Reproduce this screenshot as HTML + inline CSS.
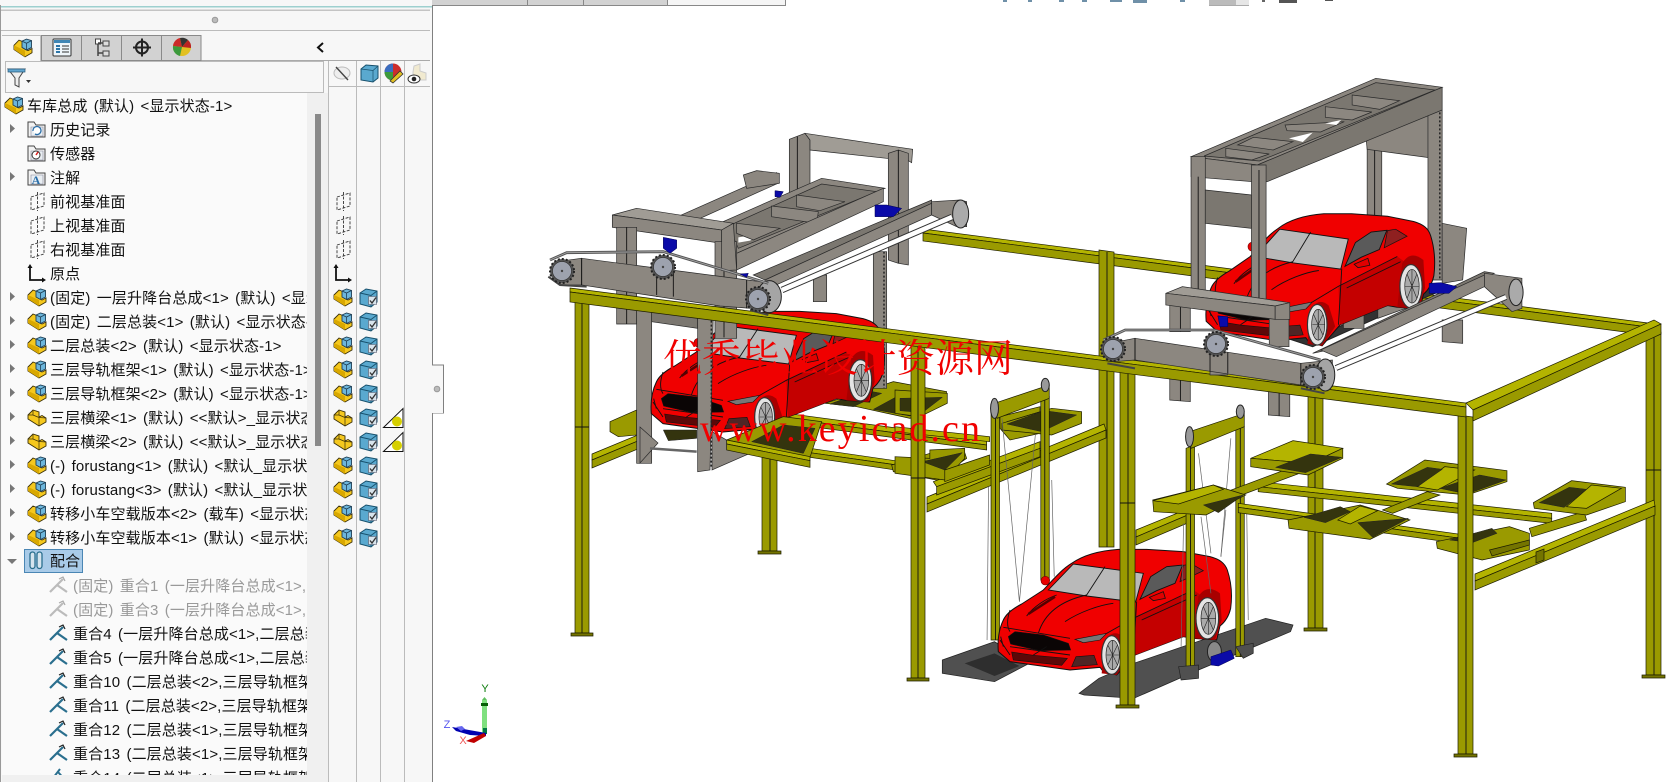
<!DOCTYPE html>
<html lang="zh"><head><meta charset="utf-8"><title>SolidWorks</title>
<style>
html,body{margin:0;padding:0;width:1676px;height:782px;overflow:hidden;background:#fff}
svg{position:absolute;left:0;top:0}
svg *{vector-effect:non-scaling-stroke}
.y{fill:#9a9a00;stroke:#1c1c00;stroke-width:.7}
.yl{fill:#b4b400;stroke:#1c1c00;stroke-width:.7}
.yd{fill:#747400;stroke:#1c1c00;stroke-width:.7}
.sl{fill:#34340e;stroke:#222;stroke-width:.5}
.g{fill:#8c8780;stroke:#2a2a2a;stroke-width:.7}
.gd{fill:#7b7770;stroke:#2a2a2a;stroke-width:.7}
.gl{fill:#a09c95;stroke:#2a2a2a;stroke-width:.7}
.dk{fill:#505050;stroke:#222;stroke-width:.7}
.bl{fill:#0a0aa8;stroke:#000050;stroke-width:.5}
.ln{fill:none;stroke:#111;stroke-width:.9}
#panel{position:absolute;left:0;top:0;width:432px;height:782px;background:#f7f7f7;font:15px/24px "Liberation Sans","Noto Sans CJK SC",sans-serif;color:#111;overflow:hidden}
#tree{position:absolute;left:2px;top:95px;width:305px;height:680px;background:#fafafa;overflow:hidden}
#treebg{position:absolute;left:2px;top:93px;width:305px;height:4px;background:#fafafa}
#tree div{position:absolute;white-space:nowrap;height:24px;word-spacing:2px;letter-spacing:.12px}
.m{color:#999}
</style></head><body>
<svg width="1676" height="782" viewBox="0 0 1676 782">
<defs>
<g id="car">
<path d="M25 335C22 300 28 265 40 240C48 222 70 205 95 192L160 150C190 118 215 88 245 70C280 45 330 32 385 28L470 28L580 35L660 50C690 58 705 70 712 90C722 120 728 160 722 205C715 235 700 250 690 258L680 300L610 295L580 290L435 345L380 405L340 395L330 382L240 390L60 365Z" fill="#f00000" stroke="#111" stroke-width="1"/>
<path d="M430 235L610 150L640 170L612 292L580 290L435 345Z" fill="#c40000"/>
<path d="M175 150L250 72L460 100L437 186L290 168Z" fill="#b9b9b9" stroke="#111" stroke-width=".9"/>
<path d="M345 80L288 168" class="ln"/>
<path d="M450 178L482 110L530 80L578 75L555 130L500 152Z" fill="#5a5a5a" stroke="#111" stroke-width=".9"/>
<path d="M580 76L605 72L640 92L570 125Z" fill="#8f2020" stroke="#111" stroke-width=".7"/>
<path d="M478 172L520 155L526 175L490 182Z" fill="#e00000" stroke="#111" stroke-width=".8"/>
<circle cx="166" cy="122" r="13" fill="#e80000" stroke="#700" stroke-width=".6"/>
<path d="M55 290L75 275L160 285L235 310L242 330L150 332L62 312Z" fill="#0a0505" stroke="#111" stroke-width=".6"/>
<path d="M65 336L130 346L232 355L215 376L70 360Z" fill="#5c0808" stroke="#111" stroke-width=".6"/>
<path d="M255 298L350 280L330 300L280 308Z" fill="#777" stroke="#111" stroke-width=".6"/>
<path d="M245 380L258 350L312 346L322 374Z" fill="#4f2525" stroke="#111" stroke-width=".6"/>
<path d="M32 290L40 320M30 300L60 345" class="ln"/>
<path d="M110 228C130 200 170 175 200 165M145 280C160 230 200 185 290 165M225 245C270 215 330 195 370 190M60 210C50 240 50 260 60 275M40 262L240 295M60 320L240 345M350 280L430 235L610 150M455 240L620 165M170 320L130 345M440 185L430 345" class="ln"/>
<path d="M115 222L195 170" stroke="#500" stroke-width="2.500" fill="none"/>
<path d="M335 400L345 300Q370 265 400 290L420 350L380 405Z" fill="#a80000"/>
<ellipse cx="365" cy="345" rx="30" ry="58" fill="#e4e4e4" stroke="#333" stroke-width="1.200"/>
<ellipse cx="368" cy="345" rx="20" ry="44" fill="#aaa" stroke="#111" stroke-width=".6"/>
<path d="M368 302V388M350 345H388M354 316L382 374M354 374L382 316" fill="none" stroke="#222" stroke-width=".6"/>
<path d="M610 295L625 170Q650 130 690 160L695 240L675 300Z" fill="#a80000"/>
<ellipse cx="652" cy="235" rx="34" ry="62" fill="#e4e4e4" stroke="#333" stroke-width="1.200"/>
<ellipse cx="655" cy="235" rx="22" ry="48" fill="#aaa" stroke="#111" stroke-width=".6"/>
<path d="M655 188V282M633 235H677M640 200L670 270M640 270L670 200" fill="none" stroke="#222" stroke-width=".6"/>
</g>
<g id="spr"><circle r="12" fill="#555" stroke="#222" stroke-width="2" stroke-dasharray="2 2"/><circle r="9.500" fill="#9da2ae" stroke="#333" stroke-width=".7"/><circle r="1.200" fill="#444"/></g>
</defs>

<!-- rear frame -->
<polygon class="yl" points="923,229 1656,324 1656,328 923,233"/>
<polygon class="y" points="923,233 1656,328 1656,336 923,241"/>
<polygon class="y" points="1099,250 1114,252 1114,547 1099,547"/><path class="ln" d="M1107 252V547"/>
<polygon class="y" points="1308,395 1323,395 1323,628 1308,628"/><path class="ln" d="M1315 395V628"/><rect class="yd" x="1304" y="628" width="23" height="3"/>
<polygon class="y" points="1646,330 1661,332 1661,675 1646,675"/><path class="ln" d="M1654 332V675M1646 470H1661"/><rect class="yd" x="1642" y="675" width="23" height="3"/>
<polygon class="y" points="762,453 777,453 777,551 762,551"/><path class="ln" d="M770 453V551"/><rect class="yd" x="758" y="551" width="23" height="3"/>
<!-- braces -->
<polygon class="yl" points="592,454 645,432 645,438 592,460"/><polygon class="y" points="592,460 645,438 645,446 592,468"/>
<polygon class="yl" points="927,497 1104,424 1106,430 927,504"/><polygon class="y" points="927,504 1106,430 1106,438 927,512"/>
<polygon class="yl" points="1136,530 1190,508 1190,514 1136,537"/><polygon class="y" points="1136,537 1190,514 1190,522 1136,545"/>
<polygon class="yl" points="1475,574 1654,500 1655,506 1475,581"/><polygon class="y" points="1475,581 1655,506 1655,515 1475,590"/>
<polygon class="yd" points="1536,552 1544,549 1544,560 1536,563"/>

<!-- left platform -->
<g transform="translate(520 120) scale(.33333)">
<polygon class="y" points="270,905 350,870 350,945 295,950 270,935"/>
<polygon class="sl" points="430,930 530,930 530,955 445,962"/>
<polygon class="y" points="915,850 1120,785 1280,815 1275,845 1170,895 1010,860"/>
<polygon class="sl" points="1130,830 1270,822 1170,888 1060,868"/>
<polygon class="sl" points="930,852 1040,812 1085,820 1000,860"/>
<polygon class="yl" points="800,880 1400,960 1400,975 800,895"/><polygon class="y" points="800,895 1400,975 1400,990 800,910"/>
<polygon class="yl" points="870,985 1180,1030 1180,1042 870,998"/><polygon class="y" points="870,998 1180,1042 1180,1058 870,1012"/>
<polygon class="y" points="1115,1035 1230,1000 1330,985 1340,1015 1275,1060 1275,1085 1120,1055"/>
<polygon class="sl" points="1225,1030 1330,998 1270,1050 1180,1040"/>
<polygon class="yl" points="1240,1085 1560,965 1560,985 1250,1100"/><polygon class="y" points="1250,1100 1560,985 1560,1010 1250,1125"/>
<polygon class="y" points="1440,890 1560,860 1560,940 1470,960 1440,925"/><polygon class="sl" points="1460,905 1560,875 1560,915 1500,935"/>
</g>
<!-- lift 1 + platform parts -->
<g transform="translate(900 380) scale(.4975 .33333)">
<polygon class="y" points="-10,30 95,40 95,70 40,110 -10,100"/><polygon class="sl" points="0,55 85,52 45,98 0,92"/>
<polygon class="y" points="-10,230 60,235 60,210 130,205 130,235 90,300 -10,280"/><polygon class="sl" points="45,245 125,218 90,270"/>
<polygon class="y" points="90,270 180,225 180,255 90,305"/>
<polygon class="y" points="205,130 305,85 365,95 365,130 305,165 205,150"/><polygon class="sl" points="215,132 290,92 355,105 285,155"/>
<polygon class="yl" points="-10,140 180,170 180,185 -10,155"/>
<polygon class="dk" points="85,840 190,785 260,850 190,905 85,880"/><polygon fill="#2e2e2e" points="130,850 190,820 240,858 190,888"/>
<polygon class="dk" points="360,940 400,895 470,850 735,715 790,735 785,755 600,870 470,955 370,945"/>
<polygon class="y" points="183,90 200,80 200,780 183,780"/><path class="ln" d="M192 85V780"/>
<polygon class="y" points="283,60 300,50 300,600 283,600"/><path class="ln" d="M291 55V600"/>
<polygon class="y" points="190,70 300,15 300,55 195,115"/>
<ellipse cx="190" cy="85" rx="8" ry="30" fill="#999" stroke="#222"/><ellipse cx="292" cy="15" rx="8" ry="20" fill="#999" stroke="#222"/>
<path d="M205 115L240 665M272 165L240 665M178 320L175 780M305 300L310 590M600 220L625 520M665 175L645 530" stroke="#666" stroke-width=".7" fill="none"/>
</g>
<!-- car 3 -->
<use href="#car" transform="translate(990 540) scale(.33333)"/>
<g transform="translate(900 380) scale(.4975 .33333)">
<polygon class="y" points="575,205 592,195 592,860 575,860"/><path class="ln" d="M584 200V860"/>
<polygon class="y" points="675,150 692,140 692,830 675,830"/><path class="ln" d="M684 145V830"/>
<polygon class="y" points="582,155 692,100 692,140 585,205"/>
<ellipse cx="582" cy="170" rx="8" ry="30" fill="#999" stroke="#222"/><ellipse cx="684" cy="95" rx="8" ry="20" fill="#999" stroke="#222"/>
<path d="M605 410L625 640M655 390L645 530M570 430L565 800M697 400L700 720" stroke="#666" stroke-width=".7" fill="none"/>
<polygon class="dk" points="560,860 600,855 600,895 565,900"/>
<polygon class="dk" points="675,800 710,790 710,820 690,835"/>
<ellipse cx="632" cy="815" rx="14" ry="30" fill="#888" stroke="#222"/>
<polygon class="bl" points="625,830 665,810 672,835 640,858 625,855"/>
</g>
<!-- right platform -->
<g transform="translate(900 380) scale(.4975 .33333)">
<polygon class="yl" points="720,305 1310,400 1310,415 720,320"/><polygon class="y" points="720,320 1310,415 1310,430 720,335"/>
<polygon class="yl" points="680,370 1160,470 1160,482 680,382"/><polygon class="y" points="680,382 1160,482 1160,498 680,398"/>
<polygon class="y" points="970,390 1060,335 1085,345 990,400"/>
<polygon class="y" points="630,350 800,255 830,265 660,360"/>
<polygon class="y" points="1265,445 1375,395 1380,420 1270,470"/>
<polygon class="yl" points="705,235 790,182 890,205 825,250 705,235"/><polygon class="y" points="705,235 825,250 890,205 890,235 820,285 705,260"/><polygon class="sl" points="755,262 825,222 888,232 815,278"/>
<polygon class="y" points="978,312 1055,240 1220,272 1220,305 1140,345 1000,325"/><polygon class="yl" points="1040,320 1095,260 1155,270 1080,330"/><polygon class="sl" points="988,312 1060,262 1090,268 1040,320"/><polygon class="sl" points="1085,325 1165,285 1218,300 1140,342"/>
<polygon class="y" points="1273,368 1350,302 1458,322 1458,365 1380,405 1275,385"/><polygon class="yl" points="1340,380 1390,315 1450,325 1380,385"/><polygon class="sl" points="1285,368 1345,322 1380,328 1335,382"/>
<polygon class="y" points="508,360 630,315 695,345 615,405 510,395"/><polygon class="yl" points="508,362 630,315 650,328 560,372"/><polygon class="sl" points="610,375 690,345 640,398"/>
<polygon class="y" points="780,420 925,375 1025,420 945,478 782,445"/><polygon class="yl" points="880,420 925,378 960,392 905,432"/><polygon class="sl" points="812,412 885,380 905,395 855,428"/><polygon class="sl" points="920,428 1022,415 950,472"/>
<polygon class="y" points="1078,485 1225,440 1265,460 1265,510 1170,540 1080,505"/><polygon class="sl" points="1105,480 1190,445 1200,460 1150,488"/>
<polygon class="yd" points="1185,510 1265,480 1265,495 1190,528"/>
</g>

<!-- stubs of assembly 2 -->
<g transform="translate(1060 60) scale(.39480 .33333)">
<polygon class="g" points="278,950 330,955 330,1025 278,1020"/><path class="ln" d="M305 950V1022"/>
<polygon class="g" points="528,990 582,995 582,1070 528,1065"/><path class="ln" d="M555 990V1068"/>
</g>

<!-- assembly 1 back -->
<g transform="translate(520 120) scale(.33333)">
<rect class="g" x="880" y="465" width="40" height="80"/>
<rect class="g" x="1060" y="395" width="40" height="410"/><path stroke="#222" stroke-width="1.500" stroke-dasharray="2 2" d="M1092 395V805"/>
<polygon class="g" points="808,58 855,40 870,60 870,215 808,240"/><path class="ln" d="M832 50V232"/>
<polygon class="gl" points="855,40 1178,88 1175,128 1165,122 870,90 870,60"/>
<polygon class="g" points="1105,100 1135,90 1165,100 1165,435 1135,430 1105,420"/><path class="ln" d="M1135 90V430"/>
<polygon class="g" points="455,298 770,158 778,188 490,318"/>
<polygon class="g" points="670,165 710,152 778,160 778,190 680,205"/>
<polygon class="g" points="575,320 905,175 1095,205 650,400"/>
<polygon class="gd" points="625,318 905,192 1070,215 655,385"/>
<polygon fill="#fff" points="655,352 730,340 690,362 655,368"/>
<polygon class="g" points="755,258 895,275 890,310 755,290"/>
<polygon class="g" points="830,225 975,245 900,272 830,260"/>
<polygon class="g" points="650,310 780,325 700,360 650,340"/>
<polygon class="g" points="650,400 1090,205 1090,245 650,450"/>
<polygon class="gd" points="700,465 1235,240 1235,250 735,480"/>
<polygon class="g" points="735,480 1235,250 1235,285 735,510"/>
<polygon class="g" points="1235,245 1320,240 1340,245 1340,320 1310,320 1235,285"/>
<ellipse cx="1322" cy="282" rx="24" ry="42" fill="#aaa" stroke="#222"/>
<polygon class="bl" points="1065,255 1100,255 1145,265 1120,290 1065,290"/>
<polygon class="bl" points="765,212 790,215 780,232 765,230"/>
<polygon class="gl" points="277,285 350,265 640,310 605,330"/>
<polygon class="g" points="277,285 605,330 605,370 277,322"/>
<rect class="g" x="290" y="322" width="60" height="290"/><path class="ln" d="M320 322V612"/>
<polygon class="g" points="350,550 395,550 395,1030 350,1030"/>
<polygon class="gd" points="395,550 533,575 533,625 395,605"/>
<polygon class="g" points="360,921 414,969 360,1029"/>
</g>
<!-- car 1 -->
<use href="#car" transform="translate(643 302) scale(.33333)"/>
<g transform="translate(520 120) scale(.33333)">
<path d="M390 985L530 995" stroke="#666" stroke-width="2.500"/>
<polygon class="g" points="576,935 690,1000 576,1050"/>
<polygon class="g" points="533,575 580,575 570,1050 533,1055"/><path stroke="#222" stroke-width="1.500" stroke-dasharray="2 2" d="M574 590V1040"/>
<rect class="g" x="585" y="365" width="65" height="290"/><path class="ln" d="M612 365V652"/>
<polygon class="g" points="605,330 640,310 650,450 605,452"/>
<!-- near platform -->
<polygon class="y" points="620,960 790,890 905,905 870,1012"/><polygon class="sl" points="695,965 790,915 885,925 850,1000"/>
<polygon class="yl" points="620,960 870,1010 870,1022 620,972"/><polygon class="y" points="620,972 870,1022 870,1042 620,990"/>
</g>

<!-- front columns -->
<polygon class="y" points="575,292 589,294 589,633 575,633"/><path class="ln" d="M582 294V633M575 427H589"/><rect class="yd" x="571" y="633" width="22" height="3"/>
<polygon class="y" points="911,337 925,339 925,678 911,678"/><path class="ln" d="M918 339V678M911 478H925"/><rect class="yd" x="907" y="678" width="22" height="3"/>
<polygon class="y" points="1120,352 1135,354 1135,705 1120,705"/><path class="ln" d="M1128 354V705M1120 503H1135"/><rect class="yd" x="1116" y="705" width="23" height="3"/>
<polygon class="y" points="1458,415 1473,417 1473,754 1458,754"/><path class="ln" d="M1466 417V754"/><rect class="yd" x="1454" y="754" width="23" height="3"/>
<!-- front beams -->
<polygon class="yl" points="570,288 1466,403 1466,407 570,292"/>
<polygon class="y" points="570,292 1466,407 1466,417 570,302"/>
<polygon class="yl" points="1466,403 1654,320 1661,324 1473,410"/>
<polygon class="y" points="1473,410 1661,324 1661,334 1473,421"/>

<!-- assembly 1 front -->
<g transform="translate(520 120) scale(.33333)">
<rect class="g" x="410" y="480" width="50" height="50"/>
<polygon class="g" points="110,425 185,415 185,495 120,495"/>
<polygon class="g" points="185,415 760,490 760,570 600,558 185,495"/>
<path class="ln" d="M185 415V495M410 445V525M460 452V530M680 480V565"/>
<ellipse cx="748" cy="530" rx="36" ry="48" fill="#a5a5a5" stroke="#222"/>
<path d="M90 420L140 398L430 395L745 490" stroke="#555" stroke-width="2.800" fill="none"/>
<path d="M90 420L140 398L430 395L745 490" stroke="#aaa" stroke-width=".8" fill="none"/>
<path d="M85 470L120 495L200 500M690 570L745 585" stroke="#444" stroke-width="2" fill="none"/>
<polygon class="bl" points="430,352 470,360 470,385 450,400 430,385"/>
<polygon class="bl" points="660,462 685,460 680,472"/>
</g>
<path d="M782 290L952 217" stroke="#333" stroke-width="6.500"/><path d="M782 290L952 217" stroke="#fff" stroke-width="4.500"/>
<use href="#spr" x="562" y="271"/><use href="#spr" x="663" y="267"/><use href="#spr" x="758" y="299"/>

<!-- assembly 2 -->
<g transform="translate(1060 60) scale(.39480 .33333)">
<rect class="g" x="778" y="240" width="37" height="240"/><path class="ln" d="M797 240V480"/>
<polygon class="g" points="775,232 948,150 948,295 778,268"/>
<rect class="g" x="932" y="150" width="36" height="510"/><path stroke="#222" stroke-width="1.500" stroke-dasharray="2 2" d="M962 85V660"/>
<polygon class="g" points="968,490 1030,505 1020,660 968,670"/>
<polygon class="g" points="332,290 800,55 968,82 500,315"/>
<polygon class="gd" points="365,288 800,68 950,90 505,303"/>
<polygon class="g" points="420,265 530,282 486,300 420,290"/>
<polygon class="g" points="490,232 590,245 540,270 450,255"/>
<polygon class="g" points="672,140 790,156 740,180 672,172"/>
<polygon class="g" points="740,105 860,122 810,148 740,135"/>
<polygon class="g" points="570,195 720,185 660,216 575,212"/>
<polygon fill="#fff" points="580,235 640,218 615,246"/><polygon fill="#fff" points="672,190 712,180 700,195"/>
<polygon class="gd" points="500,315 968,82 968,150 525,365 500,365"/>
<polygon class="g" points="332,290 500,315 522,368 332,350"/>
<rect class="g" x="332" y="290" width="36" height="420"/><path class="ln" d="M350 350V710"/>
<polygon class="gd" points="368,390 485,405 485,505 368,490"/>
<polygon fill="#333" stroke="#222" points="575,835 640,860 830,760 960,695 940,680 820,735 690,810"/>
<polygon class="g" points="805,745 900,715 900,735 805,775"/>
<polygon class="g" points="718,770 770,760 770,805 718,805"/>
</g>
<use href="#car" transform="translate(1198 204) scale(.32667 .35)"/>
<g transform="translate(1060 60) scale(.39480 .33333)">
<rect class="g" x="485" y="315" width="37" height="430"/><path class="ln" d="M504 330V745"/>
<polygon class="g" points="968,780 1020,780 1020,850 968,845"/>
<polygon class="gd" points="640,880 1075,635 1100,640 700,865"/>
<polygon class="g" points="660,870 1075,645 1075,680 700,890"/>
<polygon class="g" points="1075,640 1170,655 1170,745 1145,755 1075,680"/>
<ellipse cx="1155" cy="697" rx="18" ry="40" fill="#aaa" stroke="#222"/>
<polygon class="bl" points="935,670 965,668 1005,680 985,700 935,700"/>
<rect class="g" x="278" y="735" width="52" height="80"/><path class="ln" d="M305 735V815"/>
<rect class="g" x="530" y="745" width="50" height="115"/>
<polygon class="gl" points="268,700 310,680 582,728 545,738"/>
<polygon class="g" points="268,700 545,738 545,778 268,735"/>
<polygon class="g" points="545,738 582,728 582,778 545,778"/>
<polygon class="bl" points="400,768 425,770 425,800 405,800"/>
<rect class="g" x="380" y="880" width="45" height="65"/>
<polygon class="g" points="125,850 190,835 190,900 135,905"/>
<polygon class="g" points="190,835 610,910 690,900 690,980 610,975 190,900"/>
<path class="ln" d="M190 835V900M380 870V935M425 878V940M610 910V975"/>
<ellipse cx="672" cy="945" rx="24" ry="48" fill="#a5a5a5" stroke="#222"/>
<path d="M110 840L165 810L390 810L660 900" stroke="#555" stroke-width="2.800" fill="none"/>
<path d="M110 840L165 810L390 810L660 900" stroke="#aaa" stroke-width=".8" fill="none"/>
<path d="M120 910L190 925M610 985L670 1000" stroke="#444" stroke-width="2" fill="none"/>
</g>
<path d="M1336 368L1506 297" stroke="#333" stroke-width="6"/><path d="M1336 368L1506 297" stroke="#fff" stroke-width="4"/>
<use href="#spr" x="1113" y="349"/><use href="#spr" x="1216" y="344"/><use href="#spr" x="1313" y="377"/>

<!-- gizmo -->
<rect x="482" y="700" width="5" height="33" fill="#7fe07f"/><rect x="481" y="703" width="7" height="3" fill="#075f07"/><path d="M482 700L484.500 697L487 700" fill="#60c060"/><rect x="483" y="728" width="4" height="6" fill="#074"/>
<path d="M452 727L486 733L486 736L470 735L456 731Z" fill="#0000b0"/><path d="M456 727l6 -1l3 3l-4 2z" fill="#6666ee"/>
<path d="M466 741L484 733L486 736L474 743Z" fill="#c00000"/>
<text x="485" y="692" fill="#0a7a0a" font-family="Liberation Sans" font-size="11" text-anchor="middle">Y</text>
<text x="447" y="728" fill="#5555ee" font-family="Liberation Sans" font-size="11" text-anchor="middle">Z</text>
<text x="463" y="744" fill="#ee5555" font-family="Liberation Sans" font-size="11" text-anchor="middle">X</text>

<!-- watermark -->
<text x="663" y="372" fill="#f00000" font-family="'Noto Serif CJK SC',serif" font-size="39" textLength="350" lengthAdjust="spacing">优秀毕业设计资源网</text>
<text x="700" y="441" fill="#f00000" font-family="'Liberation Serif',serif" font-size="38" textLength="280" lengthAdjust="spacing">www.keyicad.cn</text>

<!-- top strip -->
<rect x="0" y="0" width="667" height="5" fill="#d2d2d2"/><rect x="667" y="0" width="119" height="5" fill="#f5f5f5"/>
<rect x="0" y="5" width="786" height="1" fill="#888"/><rect x="785" y="0" width="1" height="6" fill="#888"/>
<path d="M66.500 0V5M122.500 0V5M178.500 0V5M262.500 0V5M318.500 0V5M374.500 0V5M527.500 0V5M583.500 0V5M667.500 0V5" stroke="#888"/>
<g fill="#6f90a8"><rect x="1003" y="0" width="4" height="2"/><rect x="1028" y="0" width="4" height="2"/><rect x="1059" y="0" width="5" height="2"/><rect x="1082" y="0" width="5" height="2"/><rect x="1110" y="0" width="12" height="2"/><rect x="1133" y="0" width="14" height="3"/><rect x="1180" y="0" width="5" height="2"/></g>
<rect x="1209" y="0" width="27" height="5" fill="#bbb"/><rect x="1236" y="0" width="13" height="5" fill="#e6e6e6"/><rect x="1209" y="5" width="40" height="1" fill="#aaa"/>
<rect x="1262" y="0" width="3" height="2" fill="#666"/><rect x="1279" y="0" width="18" height="3" fill="#555"/><rect x="1325" y="0" width="8" height="1" fill="#555"/>
</svg>

<div id="panel">
<div id="treebg"></div>
<div id="tree">
<div style="left:25px;top:0">车库总成 (默认) &lt;显示状态-1&gt;</div>
<div style="left:48px;top:24px">历史记录</div>
<div style="left:48px;top:48px">传感器</div>
<div style="left:48px;top:72px">注解</div>
<div style="left:48px;top:96px">前视基准面</div>
<div style="left:48px;top:120px">上视基准面</div>
<div style="left:48px;top:144px">右视基准面</div>
<div style="left:48px;top:168px">原点</div>
<div style="left:48px;top:192px">(固定) 一层升降台总成&lt;1&gt; (默认) &lt;显示状态-1&gt;</div>
<div style="left:48px;top:216px">(固定) 二层总装&lt;1&gt; (默认) &lt;显示状态-1&gt;</div>
<div style="left:48px;top:240px">二层总装&lt;2&gt; (默认) &lt;显示状态-1&gt;</div>
<div style="left:48px;top:264px">三层导轨框架&lt;1&gt; (默认) &lt;显示状态-1&gt;</div>
<div style="left:48px;top:288px">三层导轨框架&lt;2&gt; (默认) &lt;显示状态-1&gt;</div>
<div style="left:48px;top:312px">三层横梁&lt;1&gt; (默认) &lt;&lt;默认&gt;_显示状态-1&gt;</div>
<div style="left:48px;top:336px">三层横梁&lt;2&gt; (默认) &lt;&lt;默认&gt;_显示状态-1&gt;</div>
<div style="left:48px;top:360px">(-) forustang&lt;1&gt; (默认) &lt;默认_显示状态-1&gt;</div>
<div style="left:48px;top:384px">(-) forustang&lt;3&gt; (默认) &lt;默认_显示状态-1&gt;</div>
<div style="left:48px;top:408px">转移小车空载版本&lt;2&gt; (载车) &lt;显示状态-1&gt;</div>
<div style="left:48px;top:432px">转移小车空载版本&lt;1&gt; (默认) &lt;显示状态-1&gt;</div>
<div style="left:22px;top:454px;width:59px;height:24px;background:#a9cbe8;box-shadow:inset 0 0 0 1px #4a86b4"></div>
<div style="left:48px;top:455px">配合</div>
<div class="m" style="left:71px;top:480px">(固定) 重合1 (一层升降台总成&lt;1&gt;,二层总装&lt;1&gt;)</div>
<div class="m" style="left:71px;top:504px">(固定) 重合3 (一层升降台总成&lt;1&gt;,二层总装&lt;1&gt;)</div>
<div style="left:71px;top:528px">重合4 (一层升降台总成&lt;1&gt;,二层总装&lt;1&gt;)</div>
<div style="left:71px;top:552px">重合5 (一层升降台总成&lt;1&gt;,二层总装&lt;1&gt;)</div>
<div style="left:71px;top:576px">重合10 (二层总装&lt;2&gt;,三层导轨框架&lt;1&gt;)</div>
<div style="left:71px;top:600px">重合11 (二层总装&lt;2&gt;,三层导轨框架&lt;2&gt;)</div>
<div style="left:71px;top:624px">重合12 (二层总装&lt;1&gt;,三层导轨框架&lt;1&gt;)</div>
<div style="left:71px;top:648px">重合13 (二层总装&lt;1&gt;,三层导轨框架&lt;2&gt;)</div>
<div style="left:71px;top:672px">重合14 (二层总装&lt;1&gt;,三层导轨框架&lt;1&gt;)</div>
</div>
</div>

<svg width="1676" height="782" viewBox="0 0 1676 782" style="pointer-events:none">
<defs>
<g id="asm"><path d="M0 7L5 2L10 4V10L14 12L18 10V14L11 18L0 11Z" fill="#f5c81e" stroke="#3a3008" stroke-width=".9"/><path d="M0 7L11 12V18L0 11Z" fill="#d9a800"/><path d="M8 3L12.500 1L17.500 2.500V9L12.500 11.500L8 9Z" fill="#6db6dc" stroke="#1e3f55" stroke-width=".9"/><path d="M8 3L12.500 5L17.500 2.500M12.500 5V11.500" fill="none" stroke="#1e3f55" stroke-width=".8"/></g>
<g id="prt"><path d="M0 7L5 2L11 4V9L14 7.500L18 10V14L11 18L0 11Z" fill="#f5c81e" stroke="#3a3008" stroke-width=".9"/><path d="M5 2V7L0 7M5 7L11 9.500V18M11 9.500L18 10" fill="none" stroke="#3a3008" stroke-width=".7"/></g>
<g id="cub"><path d="M0 4L6 0L17 2V13L11 18L0 15Z" fill="#5aa9cf" stroke="#17506c" stroke-width="1"/><path d="M0 4L11 6.500L17 2M11 6.500V18" fill="none" stroke="#17506c" stroke-width=".9"/><rect x="8.500" y="7.500" width="8" height="8" fill="#d8e4ec" stroke="#556" stroke-width=".6"/><path d="M10 11.500L12 14L16 8.500" fill="none" stroke="#333" stroke-width="1.300"/></g>
<g id="pln"><path d="M1 5L14 1V14L1 18Z" fill="none" stroke="#333" stroke-width=".9" stroke-dasharray="3 1.500"/><path d="M7.500 0V19" stroke="#333" stroke-width=".9" stroke-dasharray="3 1.500"/></g>
<g id="org"><path d="M2 1V15H16" fill="none" stroke="#111" stroke-width="1.800"/><path d="M-.5 3L2 -1L4.500 3ZM14 12.500L18 15L14 17.500Z" fill="#111"/></g>
<g id="mt"><path d="M0 15L13 2" stroke="#2a6f8e" stroke-width="2.200"/><path d="M7 8L17 15" stroke="#2a6f8e" stroke-width="2.200"/><path d="M9 2L13 0L15 4" fill="none" stroke="#222" stroke-width="1.200"/></g>
<g id="mtg"><path d="M0 15L13 2M7 8L17 15" stroke="#bbb" stroke-width="2.200"/><path d="M9 2L13 0L15 4" fill="none" stroke="#aaa" stroke-width="1.200"/></g>
<g id="tri"><path d="M.5 19.500L20 .500V19.500Z" fill="#fff" stroke="#111" stroke-width="1"/><circle cx="14" cy="13.500" r="5" fill="#d6d000"/></g>
<path id="ar" d="M0 0L5 4.500L0 9Z" fill="#777"/>
<g id="fld"><path d="M1 3V17H18V5H9L7 2H1Z" fill="#f2f2f2" stroke="#444" stroke-width="1"/><rect x="4" y="7" width="12" height="9" fill="#e9eef2" stroke="#889" stroke-width=".6"/></g>
</defs>
<!-- panel frame -->
<rect x="0" y="6" width="432" height="1.500" fill="#9ed0cf"/>
<rect x="0" y="9.500" width="430" height="1.500" fill="#c4c4c4"/>
<circle cx="215" cy="20" r="2.800" fill="#bbb" stroke="#999"/>
<rect x="0" y="30" width="430" height="1" fill="#bbb"/>
<rect x="41" y="60" width="389" height="1" fill="#aaa"/>
<path d="M0.500 5V782" stroke="#999"/>
<path d="M432.500 5V365H443.500V413H432.500V782" fill="#f7f7f7" stroke="#808080"/>
<rect x="425" y="366" width="18" height="47" fill="#f7f7f7"/>
<circle cx="437" cy="389" r="2.800" fill="#bbb" stroke="#999"/>
<!-- tabs -->
<rect x="41" y="35.500" width="160" height="25" fill="#d2d2d2" stroke="#8a8a8a"/>
<path d="M41.500 35V60M81.500 35V60M121.500 35V60M161.500 35V60" stroke="#8a8a8a"/>
<path d="M2 35.500H41" fill="none" stroke="#bbb"/>
<use href="#asm" transform="translate(14 38) scale(1 1.050)"/>
<g transform="translate(53 39)"><rect width="18" height="17" fill="#eef5fa" stroke="#333" rx="1"/><rect x="1" y="1" width="16" height="3" fill="#3f86b5"/><path d="M3 7H7M3 10H7M3 13H7" stroke="#2b75a8" stroke-width="2"/><path d="M9 7H16M9 10H16M9 13H16" stroke="#333"/></g>
<g transform="translate(95 38)"><rect x=".5" y="1" width="5" height="5" fill="#fff" stroke="#444"/><rect x="8" y="3" width="6" height="5" fill="#ddd" stroke="#444"/><rect x="8" y="13" width="6" height="5" fill="#ddd" stroke="#444"/><path d="M3 6V18M3 5H8M3 15H8" stroke="#444" stroke-width="1.500" fill="none"/></g>
<g transform="translate(142 47.500)"><circle r="6" fill="none" stroke="#222" stroke-width="2"/><path d="M-9 0H9M0 -9V9" stroke="#222" stroke-width="2"/></g>
<g transform="translate(182 47)"><circle r="9" fill="#e2c021"/><path d="M0 0L-9 -1A9 9 0 0 1 -2 -9Z" fill="#cc2a2a"/><path d="M0 0L-2 -9A9 9 0 0 1 6 -7Z" fill="#333"/><path d="M0 0L6 -7A9 9 0 0 1 9 1Z" fill="#b22"/><path d="M0 0L-9 -1A9 9 0 0 0 -2 9Z" fill="#3c9a3c"/></g>
<path d="M323 43L318 47.500L323 52" fill="none" stroke="#111" stroke-width="2"/>
<!-- filter -->
<rect x="5.500" y="61.500" width="318" height="31" fill="#f7f7f7" stroke="#bbb"/>
<path d="M8 69H25L19 78V87L15 85V78Z" fill="#eee" stroke="#444"/><path d="M8 69H25V72H8Z" fill="#5fa5cf" stroke="#27587a" stroke-width=".7"/>
<path d="M26 80H31L28.500 83Z" fill="#333"/>
<!-- scrollbars -->
<rect x="307" y="93" width="21" height="689" fill="#f0f0f0"/>
<rect x="315" y="114" width="6" height="332" fill="#8a8a8a"/>
<rect x="2" y="775" width="305" height="7" fill="#f0f0f0"/>
<!-- column lines -->
<path d="M328.500 61V782M356.500 61V782M380.500 61V782M404.500 61V782M329 86.500H430" stroke="#bbb"/>
<g transform="translate(334 66)"><ellipse cx="8" cy="7" rx="8" ry="6" fill="#eee" stroke="#bbb"/><path d="M2 1L14 14" stroke="#444" stroke-width="1.400"/></g>
<g transform="translate(361 65)"><path d="M0 4L5 0L17 1V13L12 17L0 15Z" fill="#5aa9cf" stroke="#17506c"/><path d="M0 4L12 5.500L17 1M12 5.500V17" fill="none" stroke="#17506c" stroke-width=".7"/></g>
<g transform="translate(393 72)"><circle r="8.500" fill="#cc2d2d"/><path d="M0 0L-8.500 0A8.500 8.500 0 0 1 0 -8.500Z" fill="#3a6ec0"/><path d="M0 0L-8.500 0A8.500 8.500 0 0 0 0 8.500Z" fill="#3c9a3c"/><path d="M-3 9L7 -1L10 2L0 11Z" fill="#e2c021" stroke="#333" stroke-width=".8"/></g>
<g transform="translate(408 64)"><path d="M6 2L12 0L12 7L18 9V16H5L5 8Z" fill="#f1ead0" stroke="#ccc"/><ellipse cx="6" cy="15" rx="6" ry="4" fill="#fff" stroke="#333"/><circle cx="6" cy="15" r="2.300" fill="#222"/></g>

<!-- root -->
<use href="#asm" x="5" y="96"/>
<use href="#ar" x="10" y="124"/><use href="#fld" x="27" y="120"/><path d="M33 131a4 4 0 1 1 2 3" fill="#fff" stroke="#2a6ea8" stroke-width="1.300"/>
<use href="#fld" x="27" y="144"/><circle cx="36" cy="155" r="4" fill="#fff" stroke="#333"/><path d="M36 155L38 152" stroke="#d22" stroke-width="1.500"/>
<use href="#ar" x="10" y="172"/><use href="#fld" x="27" y="168"/><text x="36" y="184" font-family="Liberation Serif" font-size="12" font-weight="bold" fill="#2a6ea8" text-anchor="middle">A</text>
<use href="#pln" x="30" y="192"/><use href="#pln" x="30" y="216"/><use href="#pln" x="30" y="240"/>
<use href="#org" x="28" y="265"/>
<use href="#pln" x="336" y="192"/><use href="#pln" x="336" y="216"/><use href="#pln" x="336" y="240"/>
<use href="#org" x="334" y="265"/>

<!-- component rows -->
<g id="r1"><use href="#ar" x="10" y="292"/><use href="#asm" x="28" y="288"/><use href="#asm" x="334" y="288"/><use href="#cub" x="360" y="289"/></g>
<use href="#r1" y="24"/><use href="#r1" y="48"/><use href="#r1" y="72"/><use href="#r1" y="96"/>
<g id="r2"><use href="#ar" x="10" y="412"/><use href="#prt" x="28" y="408"/><use href="#prt" x="334" y="408"/><use href="#cub" x="360" y="409"/></g>
<use href="#r2" y="24"/>
<use href="#r1" y="168"/><use href="#r1" y="192"/><use href="#r1" y="216"/><use href="#r1" y="240"/>
<use href="#tri" x="383" y="408"/><use href="#tri" x="383" y="432"/>

<!-- mates -->
<path d="M7 559H17L12 564Z" fill="#777"/>
<g transform="translate(28 551)"><path d="M2 3.500A2.500 2.500 0 0 1 7 3.500V15A2.500 2.500 0 0 1 2 15ZM9 3.500A2.500 2.500 0 0 1 14 3.500V15A2.500 2.500 0 0 1 9 15Z" fill="#d5e4ee" stroke="#2a6f8e" stroke-width="1.300"/></g>
<use href="#mtg" x="50" y="577"/><use href="#mtg" x="50" y="601"/>
<use href="#mt" x="50" y="625"/><use href="#mt" x="50" y="649"/><use href="#mt" x="50" y="673"/><use href="#mt" x="50" y="697"/><use href="#mt" x="50" y="721"/><use href="#mt" x="50" y="745"/>
<path d="M60 769L50 782M58 772L67 782" stroke="#2a6f8e" stroke-width="2"/>
<rect x="2" y="775" width="305" height="7" fill="#f0f0f0"/>
</svg>
</body></html>
